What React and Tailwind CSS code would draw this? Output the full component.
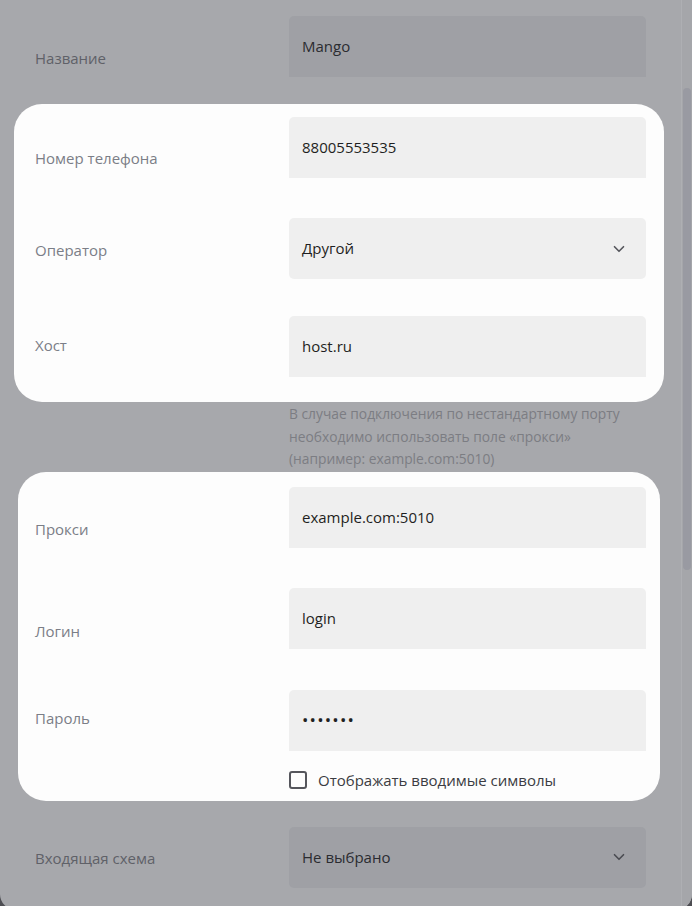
import { ChevronDown } from "lucide-react";

const font = { fontFamily: '"Open Sans", "Liberation Sans", sans-serif' };

function Label({ children, offset, dim }) {
  return (
    <div
      className={`text-[15px] leading-5 ${dim ? "text-[#5f6168]" : "text-[#7b7e87]"}`}
      style={{ paddingTop: offset }}
    >
      {children}
    </div>
  );
}

function TextField({ value, dim }) {
  return (
    <div
      className={`flex h-[61px] items-center rounded-t-[5px] px-[13px] text-[15px] ${
        dim ? "bg-[#9fa0a5] text-[#2b2c31]" : "bg-[#efefef] text-[#1f1f22]"
      }`}
    >
      {value}
    </div>
  );
}

function SelectField({ value, dim }) {
  return (
    <div
      className={`flex h-[61px] items-center justify-between rounded-[5px] pl-[13px] pr-[18px] text-[15px] font-medium ${
        dim ? "bg-[#9fa0a5] text-[#2b2c31]" : "bg-[#efefef] text-[#1f1f22]"
      }`}
    >
      <span>{value}</span>
      <ChevronDown
        size={18}
        strokeWidth={2.2}
        className={dim ? "text-[#4b4c52]" : "text-[#55565c]"}
      />
    </div>
  );
}

function Row({ label, offset, dim, children, className = "" }) {
  return (
    <div className={`grid grid-cols-[254px_357px] ${className}`}>
      <Label offset={offset} dim={dim}>
        {label}
      </Label>
      <div>{children}</div>
    </div>
  );
}

export default function App() {
  return (
    <div className="h-[906px] overflow-hidden bg-[#4d4d52]" style={font}>
      <div className="flex h-[910px] overflow-hidden rounded-b-2xl bg-[#a7a8ac]">
        <div className="flex-1 pl-[35px] pr-[35px] pt-4">
          <Row label="Название" offset={32} dim>
            <TextField value="Mango" dim />
          </Row>

          <div className="mt-[27px] ml-[-21px] mr-[-18px] rounded-[28px] bg-[#fdfdfd] pb-[25px] pl-[21px] pr-[18px] pt-[13px]">
            <Row label="Номер телефона" offset={31}>
              <TextField value="88005553535" />
            </Row>
            <Row label="Оператор" offset={22} className="mt-10">
              <SelectField value="Другой" />
            </Row>
            <Row label="Хост" offset={19} className="mt-[37px]">
              <TextField value="host.ru" />
            </Row>
          </div>

          <div className="grid grid-cols-[254px_357px] pt-[1px]">
            <div />
            <p className="text-[13.8px] leading-[22.5px] text-[#7c7d83]">
              В случае подключения по нестандартному порту
              <br />
              необходимо использовать поле «прокси»
              <br />
              (например: example.com:5010)
            </p>
          </div>

          <div className="mt-[1px] ml-[-17px] mr-[-14px] rounded-[28px] bg-[#fdfdfd] pb-3 pl-[17px] pr-[14px] pt-[15px]">
            <Row label="Прокси" offset={32}>
              <TextField value="example.com:5010" />
            </Row>
            <Row label="Логин" offset={33} className="mt-10">
              <TextField value="login" />
            </Row>
            <Row label="Пароль" offset={18} className="mt-[41px]">
              <TextField
                value={<span className="text-[17px] tracking-[1.2px]">•••••••</span>}
              />
            </Row>
            <div className="mt-5 grid grid-cols-[254px_357px]">
              <div />
              <label className="flex items-center gap-[11px] text-[15px] leading-[18px] text-[#3b3c42]">
                <span className="h-[18px] w-[18px] rounded-[3px] border-2 border-[#55565c]" />
                Отображать вводимые символы
              </label>
            </div>
          </div>

          <Row label="Входящая схема" offset={21} dim className="mt-[26px]">
            <SelectField value="Не выбрано" dim />
          </Row>
        </div>

        <div className="w-[11px] border-l border-[#aeafb3] bg-[#a5a6aa] pt-[88px]">
          <div className="ml-[1px] h-[482px] w-[8px] rounded-full bg-[#999aa2]" />
        </div>
      </div>
    </div>
  );
}
